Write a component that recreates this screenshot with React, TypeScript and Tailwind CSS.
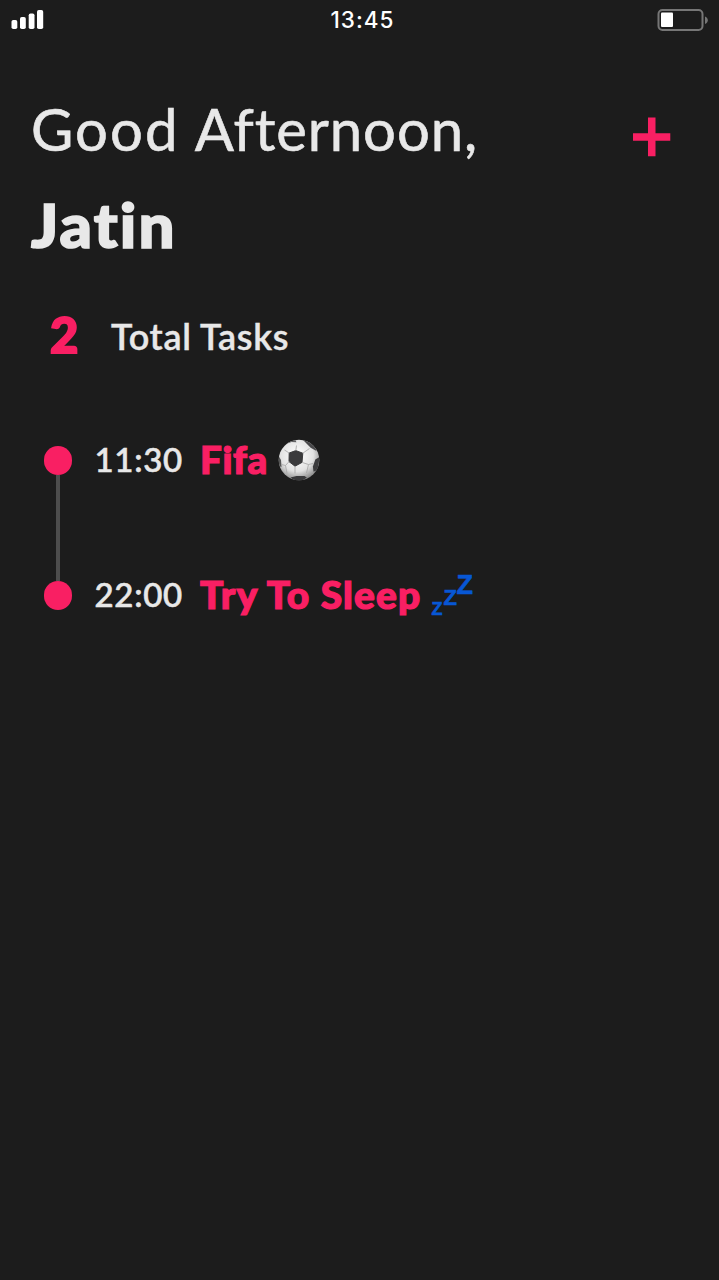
import type { ReactNode } from "react";

function Signal() {
  return (
    <svg width="34" height="20" viewBox="0 0 34 20" fill="#fff">
      <rect x="0.5" y="10" width="5.8" height="9" rx="1.8" />
      <rect x="9" y="7" width="5.8" height="12" rx="1.8" />
      <rect x="17.7" y="3.5" width="5.8" height="15.5" rx="1.8" />
      <rect x="26" y="0" width="6.2" height="19" rx="1.8" />
    </svg>
  );
}

function Battery() {
  return (
    <svg width="52" height="24" viewBox="0 0 52 24">
      <rect x="2.5" y="2" width="44" height="20" rx="4" fill="none" stroke="#767676" strokeWidth="2" />
      <rect x="5" y="4.5" width="12" height="14.5" rx="1" fill="#fff" />
      <path d="M49 8.5c2.2 1 2.8 2.2 2.8 3.7s-.6 2.7-2.8 3.7z" fill="#767676" />
    </svg>
  );
}

function Ball() {
  return (
    <svg width="42" height="42" viewBox="0 0 42 42">
      <defs>
        <radialGradient id="ball" cx="45%" cy="38%" r="62%">
          <stop offset="0" stopColor="#ffffff" />
          <stop offset="0.65" stopColor="#e2e2e2" />
          <stop offset="1" stopColor="#8c8c8c" />
        </radialGradient>
        <clipPath id="edge">
          <circle cx="21" cy="21" r="20.3" />
        </clipPath>
      </defs>
      <circle cx="21" cy="21" r="20.3" fill="url(#ball)" />
      <g clipPath="url(#edge)">
        <path d="M11.2 14 17.8 11.6 24.8 14.2 24 23.4 17 27.2 11 22.6z" fill="#3a3a3c" stroke="#3a3a3c" strokeLinejoin="round" />
        <path d="M24 0l7 2.2 6 5 1.5 4.8-5.8-3.2z" fill="#48484a" />
        <path d="M41.5 18l-4.2 2.5-2.4 7 .6 5.2 4.5-2z" fill="#3a3a3c" />
        <path d="M12.5 38.6l6-1.7 8 .1 2.3 1.5L24 42h-7z" fill="#3a3a3c" />
        <path d="M0 16l3 5 .5 7-2.5-1z" fill="#555" />
        <path d="M8 5l5.5-2 5 .2-1.5-3-5 .8z" fill="#626264" />
        <path
          d="M11.2 14 6.5 11M17.8 11.6 18.5 6.5M24.8 14.2 31.5 9.5M24 23.4 30.5 25.5 35 24.5M30.5 25.5 28.5 34M17 27.2V34.5M11 22.6 7.5 26.5 3.5 25.5M7.5 26.5 9 34.5"
          fill="none"
          stroke="#aaa"
          strokeWidth="0.9"
        />
      </g>
    </svg>
  );
}

function Sleep() {
  return (
    <div className="flex h-[46px] items-start font-['Liberation_Sans',sans-serif] font-bold text-[#0757d5] [-webkit-text-stroke:0.6px]">
      <span className="mt-[26px] w-[12px] text-[18px] leading-[22px]">Z</span>
      <span className="mt-[13px] w-[13px] text-[22px] leading-[26px]">Z</span>
      <span className="-mt-[3px] w-[18px] text-[27px] leading-[32px]">Z</span>
    </div>
  );
}

interface TaskProps {
  time: string;
  title: string;
  titleClass: string;
  icon: ReactNode;
  linked?: boolean;
}

function Task({ time, title, titleClass, icon, linked }: TaskProps) {
  return (
    <li className="flex h-[134.5px] items-start">
      <div className="flex h-full w-[28px] flex-col items-center">
        <span className="h-[29px] w-[28px] shrink-0 rounded-full bg-[#f91f63]" />
        {linked && <span className="w-[4px] grow bg-[#4d4d4d]" />}
      </div>
      <div className="ml-[23px] w-[105px] text-[33px] leading-[26px] font-medium tracking-[0.7px] whitespace-nowrap text-[#e8e8e8] [-webkit-text-stroke:0.6px]">
        {time}
      </div>
      <div className={titleClass}>{title}</div>
      {icon}
    </li>
  );
}

export default function App() {
  return (
    <main className="flex h-[1280px] w-[719px] flex-col overflow-hidden bg-[#1c1c1c] font-['Lato',sans-serif] text-[#e8e8e8] [font-variant-ligatures:none]">
      <header className="flex h-[40px] items-center justify-between pr-[11px] pl-[11px]">
        <div className="w-[60px]">
          <Signal />
        </div>
        <time className="ml-[6px] font-['Inter',sans-serif] text-[22.5px] font-medium tracking-[1px] text-white">13:45</time>
        <div className="flex w-[60px] justify-end">
          <Battery />
        </div>
      </header>

      <section className="flex h-[232px] items-start justify-between pt-[48px] pr-[48px] pl-[31px]">
        <h1 className="whitespace-nowrap">
          <span className="block text-[58px] leading-[82px] font-normal [-webkit-text-stroke:0.6px]">
            <span className="tracking-[2.1px] [word-spacing:-2px]">Good </span>
            <span className="tracking-[0.9px]">Afternoon,</span>
          </span>
          <span className="mt-[14px] block origin-left scale-x-[1.06] text-[60px] leading-[83px] font-black tracking-[2px] [-webkit-text-stroke:1.6px]">
            Jatin
          </span>
        </h1>
        <button aria-label="Add task" className="mt-[29px]">
          <svg width="39" height="40" viewBox="0 0 39 40" fill="#f91f63">
            <path d="M16 0.5h7.5v15.8h14.8v7.5H23.5v15.5H16V23.8H1v-7.5h15z" />
          </svg>
        </button>
      </section>

      <section className="flex h-[174px] items-start pt-[34px] pl-[50px]">
        <span className="w-[61px] text-[49px] leading-[56px] font-black text-[#f91f63] [-webkit-text-stroke:2px]">2</span>
        <span className="text-[36px] leading-[60px] font-semibold tracking-[0.65px] [-webkit-text-stroke:0.4px]">
          Total Tasks
        </span>
      </section>

      <ul className="flex flex-col pl-[43.5px]">
        <Task
          time="11:30"
          title="Fifa"
          titleClass="w-[78px] origin-left scale-x-[1.04] text-[37px] leading-[27px] font-black tracking-[0.6px] whitespace-nowrap text-[#f91f63] [-webkit-text-stroke:1.2px]"
          icon={
            <div className="-mt-[7px]">
              <Ball />
            </div>
          }
          linked
        />
        <Task
          time="22:00"
          title="Try To Sleep"
          titleClass="w-[232px] origin-left scale-x-[1.05] text-[37px] leading-[27px] font-black tracking-[1.1px] whitespace-nowrap text-[#f91f63] [-webkit-text-stroke:1.2px]"
          icon={
            <div className="-mt-[9px]">
              <Sleep />
            </div>
          }
        />
      </ul>
    </main>
  );
}
